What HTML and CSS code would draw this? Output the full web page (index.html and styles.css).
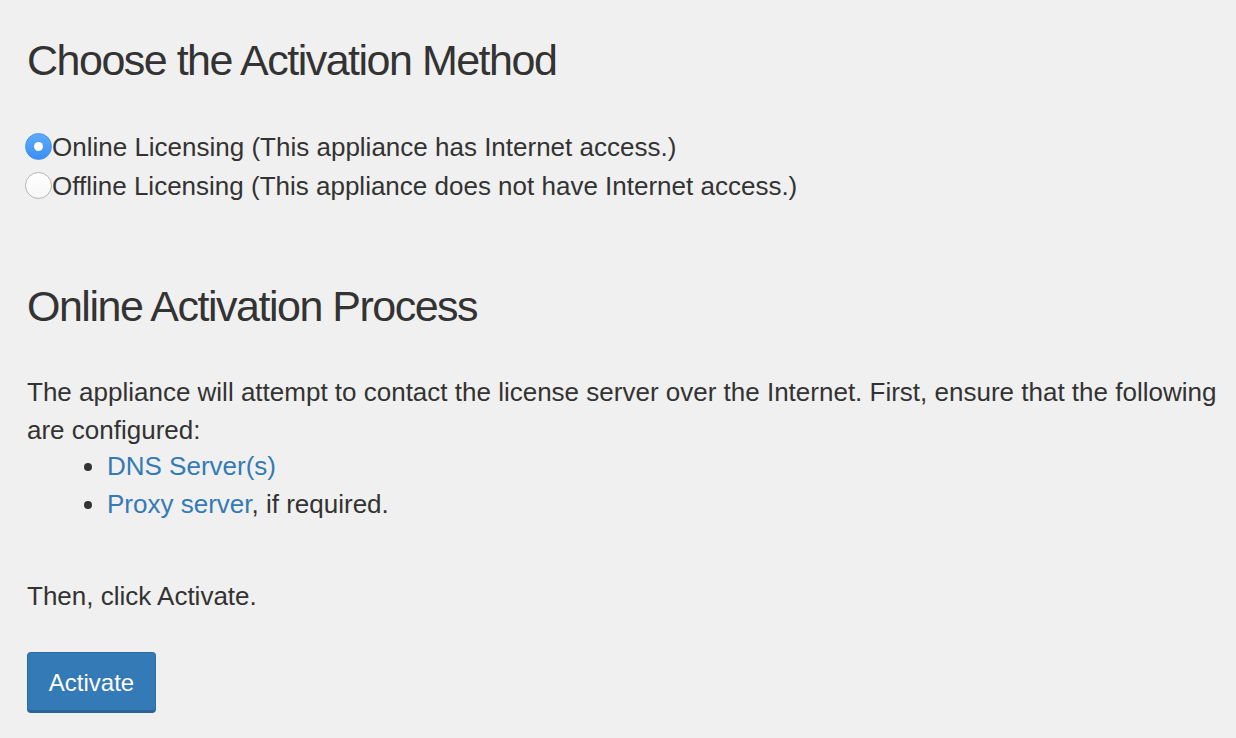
FILE: index.html
```
<!DOCTYPE html>
<html lang="en">
<head>
    <meta charset="UTF-8">
    <meta name="viewport" content="width=device-width, initial-scale=1.0">
    <title>Activation</title>
    <link rel="stylesheet" href="styles.css">
</head>
<body>
<div class="page">
    <h1 class="title">Choose the Activation Method</h1>
    <form class="methods">
        <label class="choice">
            <input type="radio" name="method" value="online" checked>
            <span>Online Licensing (This appliance has Internet access.)</span>
        </label>
        <label class="choice">
            <input type="radio" name="method" value="offline">
            <span>Offline Licensing (This appliance does not have Internet access.)</span>
        </label>
    </form>

    <h1 class="title second">Online Activation Process</h1>
    <p class="intro">The appliance will attempt to contact the license server over the Internet. First, ensure that the following are configured:</p>
    <ul class="checklist">
        <li><a href="#">DNS Server(s)</a></li>
        <li><a href="#">Proxy server</a>, if required.</li>
    </ul>
    <p class="then">Then, click Activate.</p>
    <button class="activateButton" type="button">Activate</button>
</div>
</body>
</html>
```

FILE: styles.css
```
html {
    height: 100%;
}

body {
    height: 100%;
    margin: 0;
    background-color: #f0f0f0;
    color: #333333;
    font-family: "Liberation Sans", Arial, Helvetica, sans-serif;
    font-size: 26px;
    line-height: 38px;
}

.page {
    padding: 36px 4px 0 27px;
}

.title {
    margin: 0;
    font-size: 43px;
    font-weight: normal;
    line-height: 48px;
    letter-spacing: -1.5px;
    color: #333333;
}

.title.second {
    margin-top: 77px;
    margin-bottom: 43px;
}

.methods {
    margin-top: 43px;
}

.choice {
    display: flex;
    align-items: center;
    height: 39px;
    cursor: pointer;
}

.choice input {
    appearance: none;
    -webkit-appearance: none;
    width: 27px;
    height: 27px;
    margin: 0 0 0 -2px;
    border-radius: 50%;
    border: 1px solid #b4b4b4;
    background: linear-gradient(#ffffff, #f6f6f6);
    box-sizing: border-box;
    position: relative;
    flex-shrink: 0;
}

.choice input:checked {
    border-color: #3e92f1;
    background: linear-gradient(#5eaafc, #3b8ff5);
}

.choice input:checked::after {
    content: "";
    position: absolute;
    left: 50%;
    top: 50%;
    width: 9px;
    height: 9px;
    margin: -4.5px 0 0 -4.5px;
    border-radius: 50%;
    background-color: #ffffff;
}

.intro {
    margin: 0;
}

.checklist {
    margin: -2px 0 0 0;
    padding-left: 80px;
}

.checklist li {
    line-height: 38px;
}

a {
    color: #337ab7;
    text-decoration: none;
}

.then {
    margin: 54px 0 37px 0;
}

.activateButton {
    width: 129px;
    height: 61px;
    padding: 3px 0 0 0;
    border: 1px solid #2e6da4;
    border-bottom: 3px solid #2a6496;
    border-radius: 4px;
    background-color: #337ab7;
    color: #ffffff;
    font-family: "Liberation Sans", Arial, Helvetica, sans-serif;
    font-size: 24px;
    cursor: pointer;
}
```
